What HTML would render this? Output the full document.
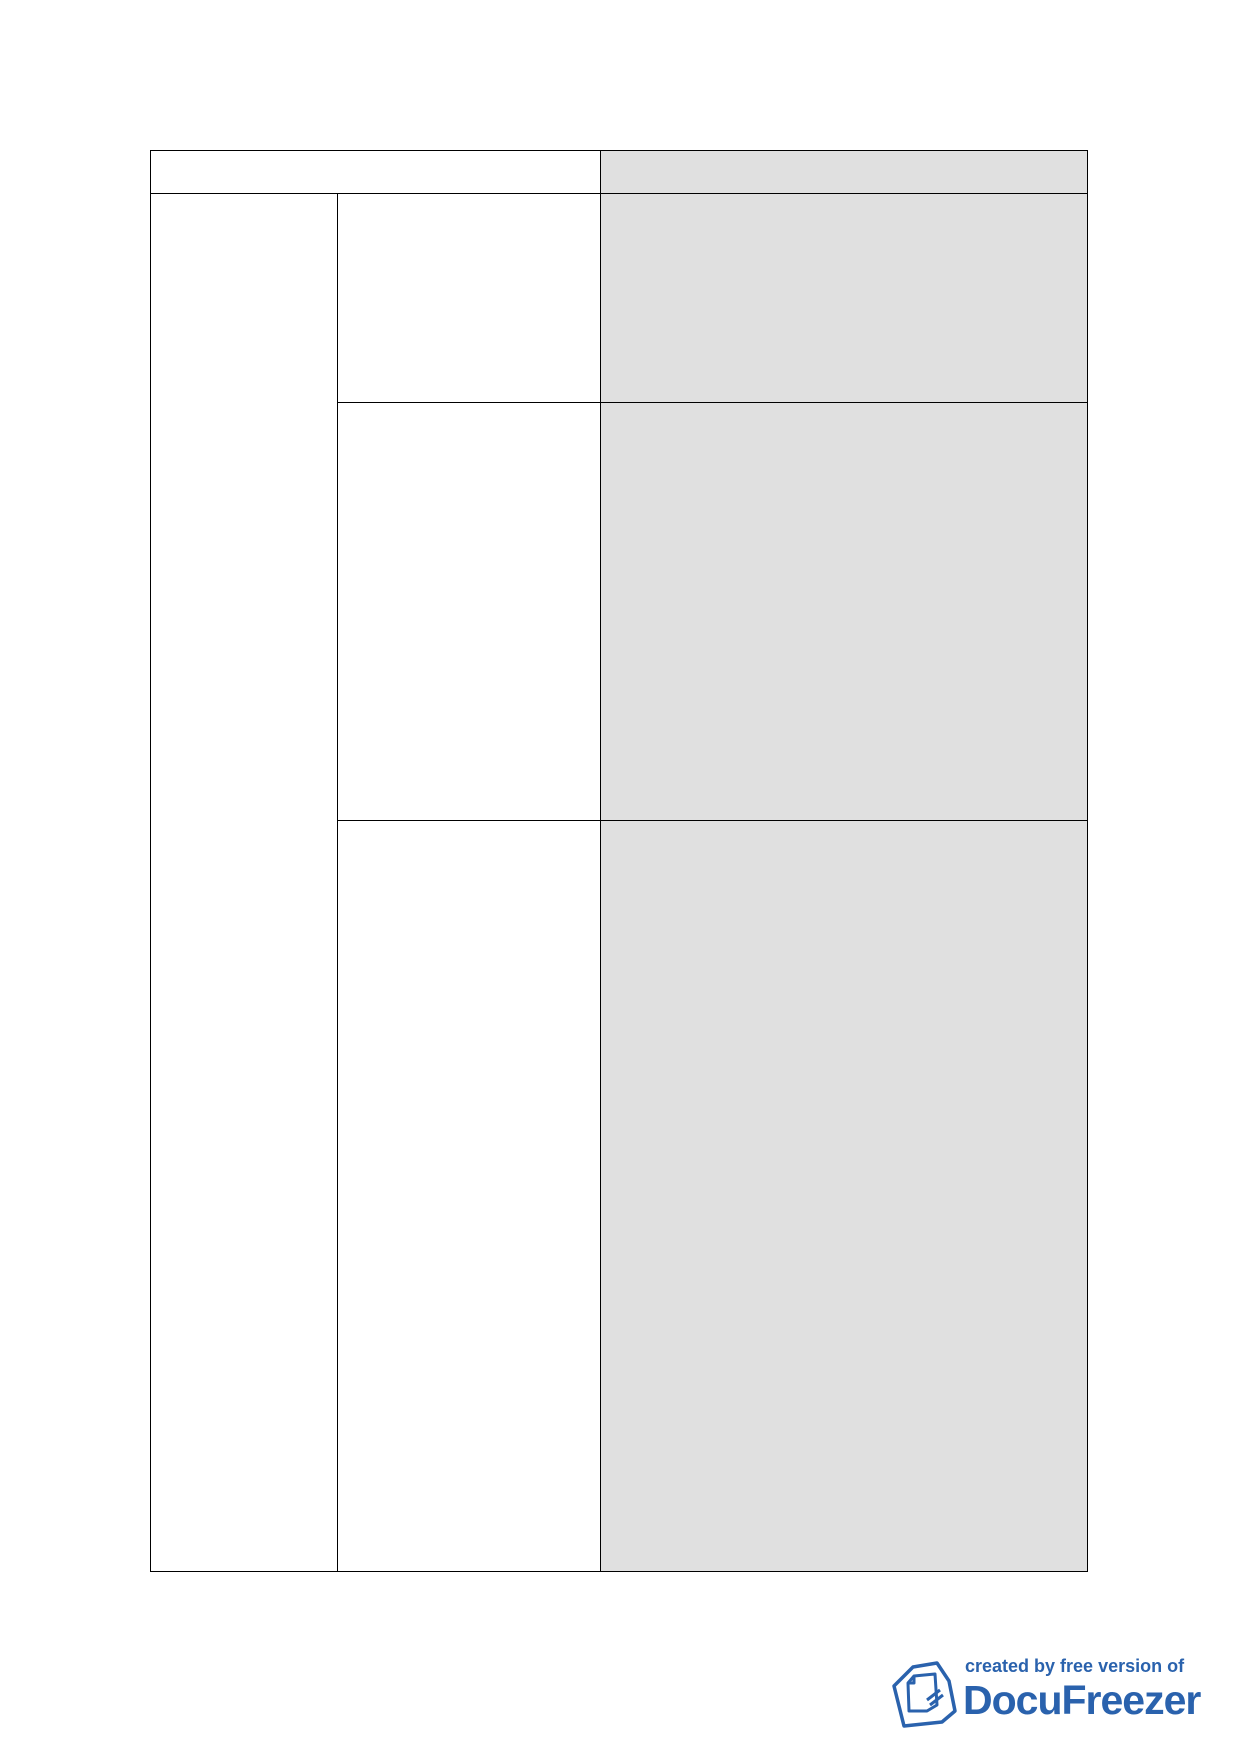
<!DOCTYPE html>
<html><head><meta charset="utf-8"><style>
html,body{margin:0;padding:0;background:#fff;}
body{width:1240px;height:1754px;position:relative;overflow:hidden;font-family:"Liberation Sans",sans-serif;}
.g{position:absolute;background:#e0e0e0;}
.l{position:absolute;background:#000;}
</style></head><body>
<div class="g" style="left:600px;top:150px;width:487px;height:1421px"></div>
<div class="l" style="left:150px;top:150px;width:938px;height:1px"></div>
<div class="l" style="left:150px;top:1571px;width:938px;height:1px"></div>
<div class="l" style="left:150px;top:150px;width:1px;height:1422px"></div>
<div class="l" style="left:1087px;top:150px;width:1px;height:1422px"></div>
<div class="l" style="left:150px;top:193px;width:938px;height:1px"></div>
<div class="l" style="left:337px;top:193px;width:1px;height:1379px"></div>
<div class="l" style="left:600px;top:150px;width:1px;height:1422px"></div>
<div class="l" style="left:337px;top:402px;width:751px;height:1px"></div>
<div class="l" style="left:337px;top:820px;width:751px;height:1px"></div>
<svg style="position:absolute;left:885px;top:1655px" width="80" height="75" viewBox="0 0 80 75">
<polygon points="9,31 28,12 52,8 64,26 70,56 57,67 19,71" fill="none" stroke="#2a62ad" stroke-width="3.5" stroke-linejoin="round"/>
<path d="M29,21 L50,19 L52,50 L42,56 L24,56 L23,28 Z M23,28 L29,28 L29,21" fill="none" stroke="#2a62ad" stroke-width="3" stroke-linejoin="round"/>
<path d="M42,45 L55,35 M45,50 L58,40" stroke="#2a62ad" stroke-width="3"/>
</svg>
<div style="position:absolute;left:965px;top:1656px;font-size:18px;font-weight:bold;color:#2a62ad;white-space:nowrap">created by free version of</div>
<div style="position:absolute;left:963px;top:1677px;font-size:41px;font-weight:bold;color:#2a62ad;white-space:nowrap;letter-spacing:-1px">DocuFreezer</div>
</body></html>
